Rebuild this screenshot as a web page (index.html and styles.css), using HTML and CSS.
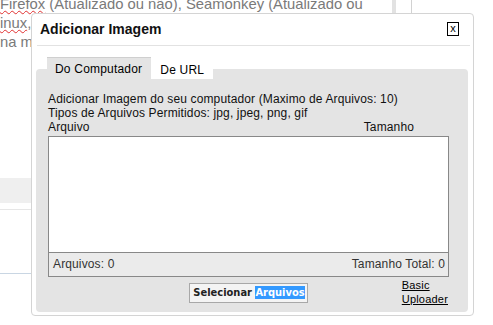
FILE: index.html
```html
<!DOCTYPE html>
<html lang="pt">
<head>
<meta charset="UTF-8">
<title>Adicionar Imagem</title>
<link rel="stylesheet" href="styles.css">
</head>
<body>

<div class="page">
    <div class="main">
        <div class="intro">
            <div><span class="typo">Firefox</span> (Atualizado ou não), Seamonkey (Atualizado ou</div>
            <div><span class="typo">inux</span>, Opera e Google Chrome funcionam bem com</div>
            <div>na mesma versão do navegador.</div>
        </div>
        <div class="band"></div>
        <div class="rule"></div>
        <div class="rule blue"></div>
    </div>
    <div class="rail"></div>
    <div class="rail-line"></div>
</div>

<!-- Upload dialog -->
<div class="dialog">
    <div class="dialog-head">
        <span class="dialog-title">Adicionar Imagem</span>
        <span class="close">x</span>
    </div>

    <div class="tabs">
        <span class="tab active">Do Computador</span>
        <span class="tab">De URL</span>
    </div>

    <div class="panel">
        <div class="info">Adicionar Imagem do seu computador (Maximo de Arquivos: 10)</div>
        <div class="info">Tipos de Arquivos Permitidos: jpg, jpeg, png, gif</div>
        <div class="cols">
            <span>Arquivo</span>
            <span>Tamanho</span>
        </div>
        <div class="filelist">
            <div class="files"></div>
            <div class="totals">
                <span>Arquivos: 0</span>
                <span>Tamanho Total: 0</span>
            </div>
        </div>
        <div class="actions">
            <span class="select-btn">Selecionar <span class="sel">Arquivos</span></span>
            <a class="basic" href="#">Basic<br>Uploader</a>
        </div>
    </div>
</div>

</body>
</html>
```

FILE: styles.css
```css
body {
    font-family: "Liberation Sans", Arial, sans-serif;
    margin: 0;
    padding: 0;
    background: #fff;
    overflow: hidden;
}

/* page behind the dialog */
.page {
    display: flex;
    align-items: flex-start;
    height: 325px;
}
.main {
    width: 392px;
    overflow: hidden;
}
.intro {
    margin-top: -5px;
    font-size: 14.8px;
    line-height: 19px;
    color: #7a7a7a;
    white-space: nowrap;
}
.typo {
    text-decoration: underline wavy #e03030;
    text-decoration-thickness: 1px;
}
.band {
    margin-top: 126px;
    height: 25px;
    background: #efefef;
}
.rule {
    margin-top: 6px;
    height: 1px;
    background: #e6e6e6;
}
.rule.blue {
    margin-top: 63px;
    background: #c9d6e3;
}
.rail {
    width: 4px;
    height: 60px;
    background: #e2e2e2;
}
.rail-line {
    width: 1px;
    height: 60px;
    margin-left: 15px;
    background: #d2d2d2;
}

/* dialog */
.dialog {
    position: absolute;
    left: 31px;
    top: 13px;
    width: 443px;
    height: 303px;
    box-sizing: border-box;
    background: #fff;
    border: 1px solid #d4d4d4;
    border-radius: 4px;
}
.dialog-head {
    display: flex;
    justify-content: space-between;
    align-items: center;
    margin: 0 3px 0 5px;
    padding: 7px 11px 8px 3px;
    border-bottom: 1px solid #e2e2e2;
}
.dialog-title {
    font-size: 14px;
    line-height: 16px;
    font-weight: bold;
    color: #111;
}
.close {
    width: 10px;
    height: 12px;
    border: 1px solid #000;
    font-size: 11px;
    line-height: 11px;
    text-align: center;
    color: #000;
}

.tabs {
    display: flex;
    align-items: flex-end;
    height: 22px;
    margin: 11px 0 -10px 15px;
    position: relative;
    z-index: 1;
    font-size: 12px;
    letter-spacing: 0.2px;
}
.tab {
    height: 19px;
    line-height: 20px;
    padding: 0 9px 0 9px;
    background: #fff;
    color: #000;
}
.tab.active {
    height: 21px;
    line-height: 22px;
    padding: 0 9px 0 8px;
    background: #e4e4e4;
    border-top: 1px solid #cfcfcf;
}

.panel {
    margin: 0 5px 0 4px;
    height: 243px;
    box-sizing: border-box;
    padding: 23px 19px 0 12px;
    background: #e4e4e4;
    border-radius: 4px;
    font-size: 12px;
    line-height: 14px;
    letter-spacing: 0.13px;
    color: #111;
}
.cols {
    display: flex;
    justify-content: space-between;
    padding-right: 35px;
}
.filelist {
    margin-top: 2px;
    border: 1px solid #888;
}
.files {
    height: 115px;
    background: #fff;
}
.totals {
    display: flex;
    justify-content: space-between;
    height: 23px;
    line-height: 23px;
    padding: 0 3px 0 4px;
    border-top: 1px solid #888;
    background: #ebebeb;
    color: #333;
}
.actions {
    display: grid;
    grid-template-columns: 1fr auto 1fr;
    align-items: start;
    padding-top: 1px;
}
.select-btn {
    grid-column: 2;
    margin-top: 5px;
    padding: 2px 2px 2px 3px;
    border: 1px solid #a8a8a8;
    background: #f4f4f4;
    font-family: "DejaVu Sans", sans-serif;
    font-stretch: condensed;
    font-size: 11px;
    line-height: 14px;
    font-weight: bold;
    letter-spacing: 0;
    color: #222;
}
.sel {
    background: #3399ff;
    color: #fff;
}
.basic {
    justify-self: end;
    margin-right: 1px;
    font-size: 11px;
    line-height: 14px;
    letter-spacing: 0.2px;
    color: #000;
}
```
